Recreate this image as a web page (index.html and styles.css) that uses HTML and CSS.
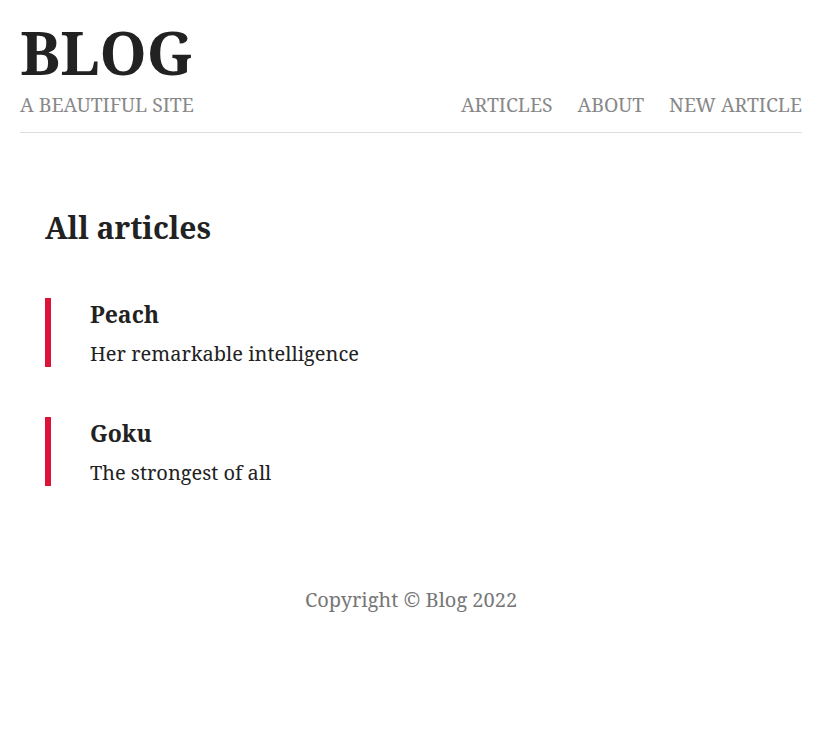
FILE: index.html
```html
<!DOCTYPE html>
<html lang="en">
<head>
<meta charset="utf-8">
<title>Blog</title>
<link rel="stylesheet" href="styles.css">
</head>
<body>
<header class="site-header">
  <h1 class="logo">BLOG</h1>
  <div class="header-row">
    <span class="tagline">A BEAUTIFUL SITE</span>
    <nav class="nav">
      <a href="#">ARTICLES</a>
      <a href="#">ABOUT</a>
      <a href="#">NEW ARTICLE</a>
    </nav>
  </div>
</header>
<main class="content">
  <h2 class="page-title">All articles</h2>
  <article class="post">
    <h3 class="post-title">Peach</h3>
    <p class="post-desc">Her remarkable intelligence</p>
  </article>
  <article class="post">
    <h3 class="post-title">Goku</h3>
    <p class="post-desc">The strongest of all</p>
  </article>
</main>
<footer class="site-footer">Copyright © Blog 2022</footer>
</body>
</html>
```
FILE: styles.css
```css
* { box-sizing: border-box; }
body {
  margin: 0;
  padding: 0 13px 0 20px;
  font-family: "Noto Serif", "DejaVu Serif", serif;
  color: #222;
  background: #fff;
}
.site-header {
  padding-top: 13px;
  border-bottom: 1px solid #ddd;
  padding-bottom: 14px;
}
.logo {
  margin: 0;
  font-size: 60px;
  line-height: 78px;
  font-weight: 700;
  color: #222;
}
.header-row {
  display: flex;
  justify-content: space-between;
  align-items: baseline;
  font-size: 19.4px;
  color: #888;
}
.nav { display: flex; gap: 25px; }
.nav a { color: #888; text-decoration: none; }
.content { padding: 74px 25px 0; }
.page-title {
  margin: 0 0 50px;
  font-size: 30px;
  font-weight: 700;
}
.post {
  border-left: 6px solid #dc143c;
  padding-left: 39px;
  margin-bottom: 50px;
}
.post-title {
  margin: 0;
  font-size: 23px;
  line-height: 32px;
  font-weight: 700;
}
.post-desc {
  margin: 11px 0 0;
  font-size: 20px;
  line-height: 26px;
}
.site-footer {
  text-align: center;
  color: #777;
  font-size: 20px;
  padding: 50px 0;
}
```
